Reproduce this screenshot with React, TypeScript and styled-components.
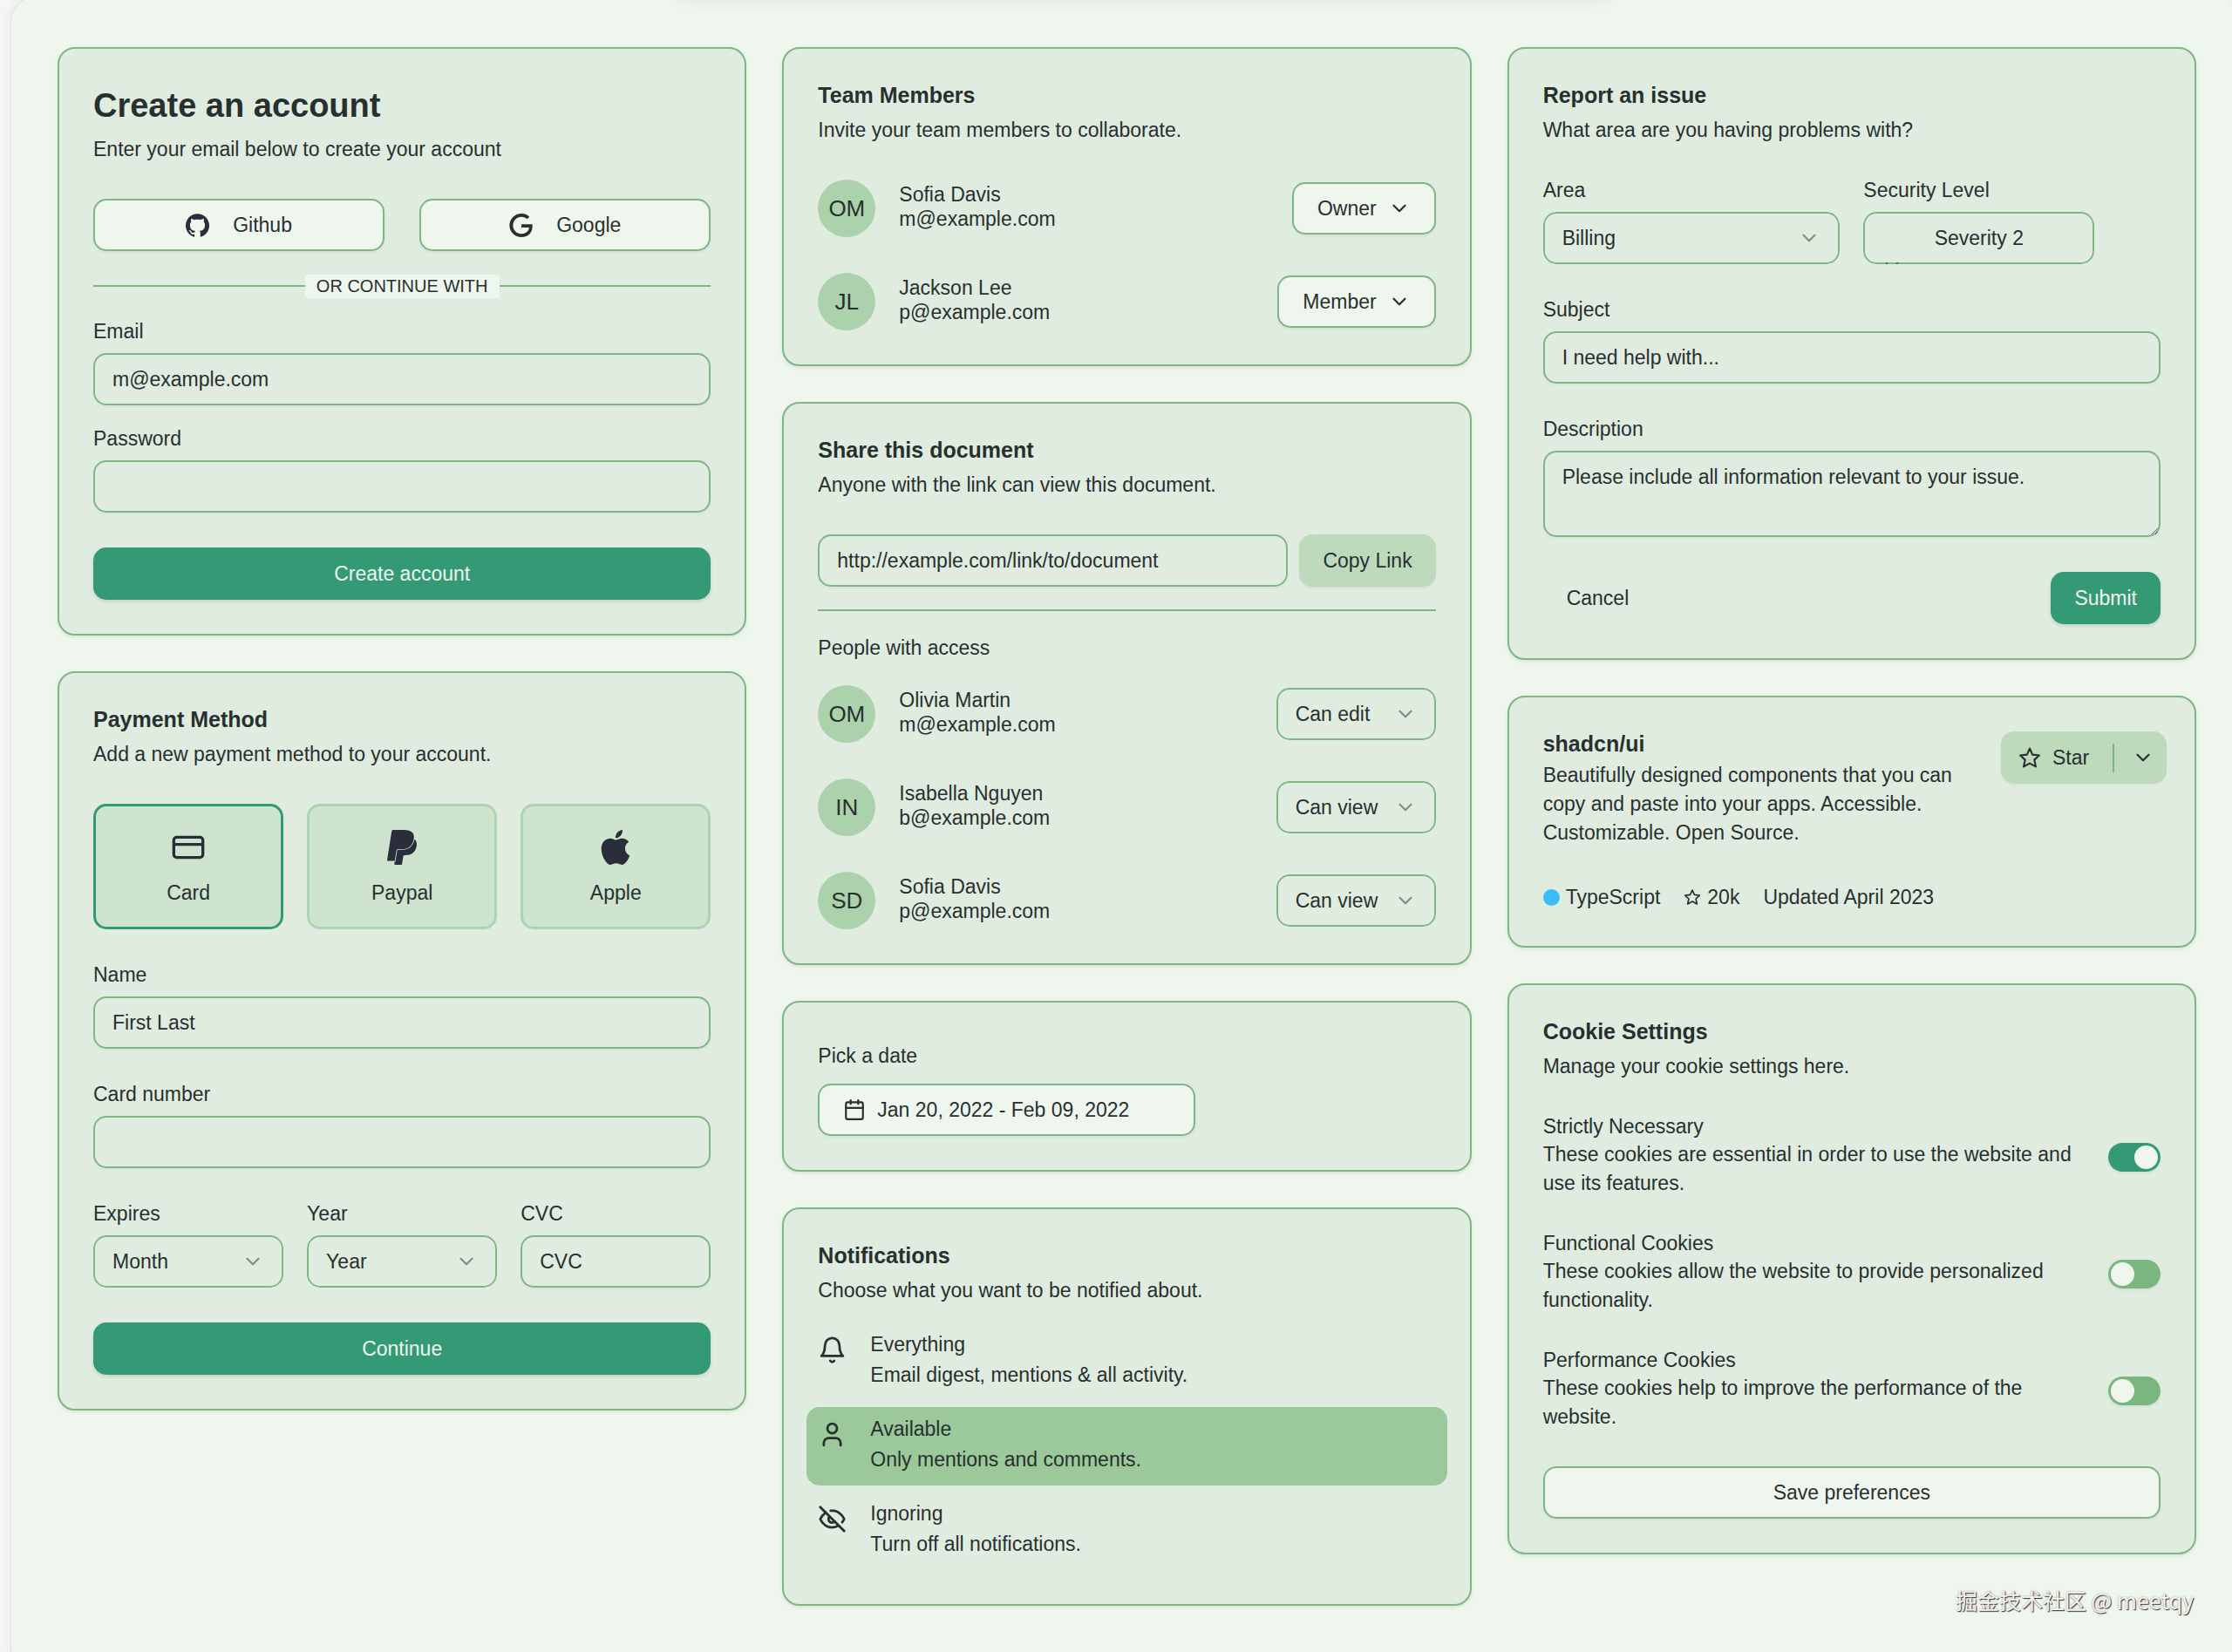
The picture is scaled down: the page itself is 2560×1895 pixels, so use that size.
import React, { useState } from "react";
import styled, { createGlobalStyle, css } from "styled-components";
import { Calendar, ChevronDown, CreditCard } from "lucide-react";
import { SiApple, SiGithub, SiGoogle } from "react-icons/si";

const c = {
  page: "#f5f6f5",
  panel: "#eff6ee",
  card: "#e0ece0",
  line: "#7eb684",
  text: "#28302f",
  brand: "#2a2d3a",
  primary: "#349a76",
  secondary: "#bddabd",
  tile: "#cee4cf",
  tileLine: "#aed3b0",
  avatar: "#abd2ab",
  accent: "#9bc99b",
  off: "#7ab77e",
};

const GlobalStyle = createGlobalStyle`
  *, *::before, *::after { box-sizing: border-box; }
  body {
    margin: 0;
    background: ${c.page};
    color: ${c.text};
    font-family: "Liberation Sans", Arial, sans-serif;
    font-size: 23px;
    line-height: 33px;
  }
  h2, h3, h4, p { margin: 0; padding: 0; }
  button, input, select, textarea { font: inherit; color: inherit; margin: 0; }
`;

const Panel = styled.main`
  position: relative;
  overflow: hidden;
  min-height: calc(100vh + 4px);
  margin: -4px 0 0 12px;
  padding: 57px 41px 53px 53px;
  border: 1px solid #dfe3df;
  border-right: 0;
  border-radius: 28px 12px 0 0;
  background: ${c.panel};
  box-shadow: 0 0 16px rgba(0, 0, 0, 0.06);
`;

const TopShade = styled.div`
  position: absolute;
  top: -30px;
  left: 30%;
  right: 28%;
  height: 28px;
  border-radius: 12px;
  box-shadow: 0 6px 16px rgba(0, 0, 0, 0.07);
`;

const Columns = styled.div`
  display: grid;
  grid-template-columns: repeat(3, minmax(0, 1fr));
  gap: 41px;
  align-items: start;
`;

const Column = styled.div`
  display: grid;
  gap: 41px;
`;

const Card = styled.section`
  display: flex;
  flex-direction: column;
  gap: 40px;
  padding: 39px;
  border: 2px solid ${c.line};
  border-radius: 20px;
  background: ${c.card};
  box-shadow: 0 2px 4px rgba(0, 0, 0, 0.08);
`;

const Title = styled.h3`
  font-size: 25px;
  line-height: 29px;
  font-weight: 700;
`;

const BigTitle = styled.h2`
  font-size: 38px;
  line-height: 53px;
  font-weight: 700;
`;

const Header = styled.header<{ $gap?: number }>`
  display: grid;
  gap: ${(p) => p.$gap ?? 8}px;
`;

const Lead = styled.p`
  line-height: 34px;
`;

const Body = styled.p`
  line-height: 33px;
`;

const ListTitle = styled.h4`
  font-size: 23px;
  font-weight: 400;
`;

const Stack = styled.div<{ $gap: number }>`
  display: grid;
  gap: ${(p) => p.$gap}px;
`;

const Split = styled.div<{ $cols: number; $gap: number }>`
  display: grid;
  grid-template-columns: repeat(${(p) => p.$cols}, minmax(0, 1fr));
  gap: ${(p) => p.$gap}px;
`;

const Between = styled.div`
  display: flex;
  align-items: center;
  justify-content: space-between;
`;

const buttonKinds = {
  primary: css`
    background: ${c.primary};
    color: #eff6ee;
    box-shadow: 0 2px 4px rgba(0, 0, 0, 0.12);
  `,
  outline: css`
    background: ${c.panel};
    border: 2px solid ${c.line};
    padding: 0 27px;
    box-shadow: 0 2px 3px rgba(0, 0, 0, 0.05);
  `,
  secondary: css`
    background: ${c.secondary};
    box-shadow: 0 2px 3px rgba(0, 0, 0, 0.05);
  `,
  ghost: css`
    background: transparent;
  `,
};

const Button = styled.button<{ $kind: keyof typeof buttonKinds; $gap?: number }>`
  display: inline-flex;
  align-items: center;
  justify-content: center;
  flex: none;
  gap: ${(p) => p.$gap ?? 13}px;
  height: 60px;
  padding: 0 27px;
  border: 0;
  border-radius: 15px;
  white-space: nowrap;
  cursor: pointer;
  ${(p) => buttonKinds[p.$kind]}
`;

const OrDivider = styled.div`
  display: flex;
  align-items: center;
  height: 28px;
  font-size: 20px;
  line-height: 27px;
  &::before, &::after {
    content: "";
    flex: 1;
    height: 2px;
    background: ${c.line};
  }
`;

const OrText = styled.span`
  padding: 0 13px;
  border-radius: 3px;
  background: ${c.panel};
`;

const FieldBox = styled.div`
  display: grid;
  gap: 13px;
  align-content: start;
`;

const Label = styled.label`
  line-height: 24px;
`;

const control = css`
  width: 100%;
  height: 60px;
  padding: 0 20px;
  border: 2px solid ${c.line};
  border-radius: 15px;
  background: transparent;
  box-shadow: 0 2px 3px rgba(0, 0, 0, 0.04);
  outline: none;
  &::placeholder { color: ${c.text}; opacity: 1; }
`;

const Input = styled.input`
  ${control}
`;

const TextArea = styled.textarea`
  ${control}
  display: block;
  height: 99px;
  padding: 12px 20px;
  line-height: 33px;
  resize: vertical;
`;

const SelectWrap = styled.span<{ $short?: boolean }>`
  position: relative;
  display: block;
  overflow: hidden;
  border-radius: 15px;
  width: ${(p) => (p.$short ? "265px" : "auto")};
`;

const SelectEl = styled.select<{ $centered?: boolean }>`
  ${control}
  display: block;
  appearance: none;
  padding-right: ${(p) => (p.$centered ? 20 : 64)}px;
  text-align-last: ${(p) => (p.$centered ? "center" : "left")};
`;

/* The narrow severity picker wraps its arrow below the text, where it is nearly all cut off. */
const Arrow = styled(ChevronDown)<{ $wrapped?: boolean }>`
  position: absolute;
  top: ${(p) => (p.$wrapped ? 49 : 17)}px;
  ${(p) => (p.$wrapped ? "left: 20px;" : "right: 22px;")}
  opacity: 0.5;
  pointer-events: none;
`;

const Tile = styled.label<{ $on: boolean }>`
  position: relative;
  display: flex;
  flex-direction: column;
  align-items: center;
  gap: 20px;
  padding: 27px;
  line-height: 24px;
  border: 3px solid ${(p) => (p.$on ? c.primary : c.tileLine)};
  border-radius: 15px;
  background: ${c.tile};
  cursor: pointer;
  svg { color: ${c.brand}; }
`;

const TileRadio = styled.input`
  position: absolute;
  inset: 0;
  margin: 0;
  opacity: 0;
`;

const Avatar = styled.span`
  display: flex;
  align-items: center;
  justify-content: center;
  flex: none;
  width: 66px;
  height: 66px;
  border-radius: 50%;
  background: ${c.avatar};
  font-size: 26px;
`;

const Who = styled.div`
  display: flex;
  align-items: center;
  gap: 27px;
`;

const Name = styled.p`
  line-height: 24px;
`;

const Rule = styled.hr`
  width: 100%;
  height: 2px;
  margin: 0;
  border: 0;
  background: ${c.line};
`;

const LinkRow = styled.div`
  display: flex;
  gap: 13px;
`;

const DateField = styled.div`
  display: grid;
  gap: 20px;
  padding-top: 10px;
  justify-items: start;
`;

const DateButton = styled(Button)`
  width: 433px;
  justify-content: flex-start;
`;

const NoticeList = styled.div`
  display: grid;
  gap: 7px;
  margin: -20px -13px 0;
`;

const Notice = styled.button<{ $on: boolean }>`
  display: flex;
  align-items: flex-start;
  gap: 27px;
  padding: 13px;
  border: 0;
  border-radius: 15px;
  background: ${(p) => (p.$on ? c.accent : "transparent")};
  text-align: left;
  cursor: pointer;
  svg { flex: none; margin-top: 2px; }
`;

const NoticeText = styled.span`
  display: grid;
  gap: 7px;
`;

const NoticeTitle = styled.span`
  line-height: 24px;
`;

const RepoHeader = styled.header`
  display: grid;
  grid-template-columns: minmax(0, 1fr) 183px;
  gap: 27px;
  align-items: start;
`;

const StarGroup = styled.div`
  display: flex;
  align-items: center;
  width: max-content;
  border-radius: 15px;
  background: ${c.secondary};
  box-shadow: 0 2px 3px rgba(0, 0, 0, 0.03);
`;

const StarButton = styled(Button)`
  padding: 0 27px 0 20px;
  box-shadow: none;
`;

const MoreButton = styled(Button)`
  padding: 0 14px 0 20px;
  box-shadow: none;
`;

const VRule = styled.span`
  width: 2px;
  height: 33px;
  background: ${c.line};
`;

const Meta = styled.div`
  display: flex;
  gap: 27px;
  line-height: 34px;
`;

const MetaItem = styled.span`
  display: inline-flex;
  align-items: center;
  gap: 7px;
`;

const Dot = styled.span`
  width: 19px;
  height: 19px;
  border-radius: 50%;
  background: #38bdf8;
`;

const CookieRow = styled.div`
  display: grid;
  grid-template-columns: minmax(0, 1fr) 60px;
  gap: 27px;
  align-items: center;
`;

const CookieLabel = styled.label`
  display: grid;
  gap: 4px;
`;

const Switch = styled.input`
  appearance: none;
  display: flex;
  align-items: center;
  width: 60px;
  height: 33px;
  padding: 0 3px;
  border-radius: 17px;
  background: ${c.off};
  box-shadow: 0 2px 3px rgba(0, 0, 0, 0.06);
  cursor: pointer;
  &::before {
    content: "";
    width: 27px;
    height: 27px;
    border-radius: 50%;
    background: ${c.panel};
  }
  &:checked {
    background: ${c.primary};
    justify-content: flex-end;
  }
`;

const Watermark = styled.div`
  position: absolute;
  right: 44px;
  bottom: 40px;
  color: #f4f6f4;
  font-family: "Noto Sans CJK SC", sans-serif;
  font-size: 25px;
  line-height: 40px;
  text-shadow: 1px 1px 1px #333, 0 0 2px #999;
`;

const stroke = {
  fill: "none",
  stroke: "currentColor",
  strokeWidth: 2,
  strokeLinecap: "round" as const,
  strokeLinejoin: "round" as const,
};

const StarIcon = ({ size }: { size: number }) => (
  <svg width={size} height={size} viewBox="0 0 24 24" aria-hidden="true" {...stroke}>
    <polygon points="12 2.4 14.9 8.9 22 9.7 16.9 14.4 18.4 21.6 12 18.1 5.6 21.6 7.1 14.4 2 9.7 9.1 8.9" />
  </svg>
);

const BellIcon = () => (
  <svg width="33" height="33" viewBox="0 0 24 24" aria-hidden="true" {...stroke}>
    <path d="M6 8a6 6 0 0 1 12 0c0 7 3 9 3 9H3s3-2 3-9" />
    <path d="M10.3 21a1.94 1.94 0 0 0 3.4 0" />
  </svg>
);

const PersonIcon = () => (
  <svg width="33" height="33" viewBox="0 0 24 24" aria-hidden="true" {...stroke}>
    <circle cx="12" cy="7" r="4" />
    <path d="M19 21v-2a4 4 0 0 0-4-4H9a4 4 0 0 0-4 4v2" />
  </svg>
);

const HiddenIcon = () => (
  <svg width="33" height="33" viewBox="0 0 24 24" aria-hidden="true" {...stroke}>
    <path d="M9.88 9.88a3 3 0 1 0 4.24 4.24" />
    <path d="M10.73 5.08A10.43 10.43 0 0 1 12 5c7 0 10 7 10 7a13.16 13.16 0 0 1-1.67 2.68" />
    <path d="M6.61 6.61A13.526 13.526 0 0 0 2 12s3 7 10 7a9.74 9.74 0 0 0 5.39-1.61" />
    <path d="M2 2l20 20" />
  </svg>
);

const PaypalIcon = () => (
  <svg width="40" height="40" viewBox="0 0 24 24" fill="currentColor" aria-hidden="true">
    <path d="M7.076 21.337H2.47a.641.641 0 0 1-.633-.74L4.944.901C5.026.382 5.474 0 5.998 0h7.46c2.57 0 4.578.543 5.69 1.81 1.01 1.15 1.304 2.42 1.012 4.287-.023.143-.047.288-.077.437-.983 5.05-4.349 6.797-8.647 6.797h-2.19c-.524 0-.968.382-1.05.9l-1.12 7.106zm14.146-14.42a3.35 3.35 0 0 0-.607-.541c-.013.076-.026.175-.041.254-.93 4.778-4.005 7.201-9.138 7.201h-2.19a.563.563 0 0 0-.556.479l-1.187 7.527h-.506l-.24 1.516a.56.56 0 0 0 .554.647h3.882c.46 0 .85-.334.922-.788.06-.26.76-4.852.816-5.09a.932.932 0 0 1 .923-.788h.58c3.76 0 6.705-1.528 7.565-5.946.36-1.847.174-3.388-.777-4.471z" />
  </svg>
);

function Field({ id, label, ...rest }: { id: string; label: string } & React.InputHTMLAttributes<HTMLInputElement>) {
  return (
    <FieldBox>
      <Label htmlFor={id}>{label}</Label>
      <Input id={id} {...rest} />
    </FieldBox>
  );
}

function SelectBox({ id, name, options, value, centered }: {
  id: string;
  name?: string;
  options: string[];
  value?: string;
  centered?: boolean;
}) {
  return (
    <SelectWrap $short={centered}>
      <SelectEl id={id} aria-label={name} defaultValue={value ?? options[0]} $centered={centered}>
        {options.map((o) => (
          <option key={o}>{o}</option>
        ))}
      </SelectEl>
      <Arrow size={26} $wrapped={centered} aria-hidden="true" />
    </SelectWrap>
  );
}

function SelectField({ label, ...rest }: { label: string; id: string; options: string[]; centered?: boolean }) {
  return (
    <FieldBox>
      <Label htmlFor={rest.id}>{label}</Label>
      <SelectBox {...rest} />
    </FieldBox>
  );
}

function Person({ initials, name, email, children }: {
  initials: string;
  name: string;
  email: string;
  children: React.ReactNode;
}) {
  return (
    <Between>
      <Who>
        <Avatar>{initials}</Avatar>
        <div>
          <Name>{name}</Name>
          <Body>{email}</Body>
        </div>
      </Who>
      {children}
    </Between>
  );
}

function CreateAccount() {
  return (
    <Card>
      <Header $gap={7}>
        <BigTitle>Create an account</BigTitle>
        <Body>Enter your email below to create your account</Body>
      </Header>
      <Stack $gap={26}>
        <Split $cols={2} $gap={40}>
          <Button type="button" $kind="outline" $gap={27}>
            <SiGithub size={27} color={c.brand} aria-hidden="true" />
            Github
          </Button>
          <Button type="button" $kind="outline" $gap={27}>
            <SiGoogle size={27} aria-hidden="true" />
            Google
          </Button>
        </Split>
        <OrDivider>
          <OrText>OR CONTINUE WITH</OrText>
        </OrDivider>
        <Field id="email" label="Email" type="email" placeholder="m@example.com" />
        <Field id="password" label="Password" type="password" />
      </Stack>
      <Button type="button" $kind="primary">Create account</Button>
    </Card>
  );
}

function PaymentMethod() {
  const [method, setMethod] = useState("Card");
  const methods = [
    { name: "Card", icon: <CreditCard size={40} aria-hidden="true" /> },
    { name: "Paypal", icon: <PaypalIcon /> },
    { name: "Apple", icon: <SiApple size={40} aria-hidden="true" /> },
  ];
  return (
    <Card>
      <Header>
        <Title>Payment Method</Title>
        <Lead>Add a new payment method to your account.</Lead>
      </Header>
      <Split $cols={3} $gap={27}>
        {methods.map((m) => (
          <Tile key={m.name} $on={method === m.name}>
            <TileRadio type="radio" name="method" checked={method === m.name} onChange={() => setMethod(m.name)} />
            {m.icon}
            {m.name}
          </Tile>
        ))}
      </Split>
      <Field id="name" label="Name" placeholder="First Last" />
      <Field id="number" label="Card number" />
      <Split $cols={3} $gap={27}>
        <SelectField id="month" label="Expires" options={["Month", "January", "February"]} />
        <SelectField id="year" label="Year" options={["Year", "2023", "2024"]} />
        <Field id="cvc" label="CVC" placeholder="CVC" />
      </Split>
      <Button type="button" $kind="primary">Continue</Button>
    </Card>
  );
}

function TeamMembers() {
  const members = [
    { initials: "OM", name: "Sofia Davis", email: "m@example.com", role: "Owner" },
    { initials: "JL", name: "Jackson Lee", email: "p@example.com", role: "Member" },
  ];
  return (
    <Card>
      <Header>
        <Title>Team Members</Title>
        <Lead>Invite your team members to collaborate.</Lead>
      </Header>
      <Stack $gap={41}>
        {members.map(({ role, ...m }) => (
          <Person key={m.initials} {...m}>
            <Button type="button" $kind="outline" aria-haspopup="menu">
              {role}
              <ChevronDown size={26} aria-hidden="true" />
            </Button>
          </Person>
        ))}
      </Stack>
    </Card>
  );
}

function ShareDocument() {
  const people = [
    { initials: "OM", name: "Olivia Martin", email: "m@example.com", access: "Can edit" },
    { initials: "IN", name: "Isabella Nguyen", email: "b@example.com", access: "Can view" },
    { initials: "SD", name: "Sofia Davis", email: "p@example.com", access: "Can view" },
  ];
  return (
    <Card>
      <Header>
        <Title>Share this document</Title>
        <Lead>Anyone with the link can view this document.</Lead>
      </Header>
      <Stack $gap={26}>
        <LinkRow>
          <Input aria-label="Document link" defaultValue="http://example.com/link/to/document" readOnly />
          <Button type="button" $kind="secondary">Copy Link</Button>
        </LinkRow>
        <Rule />
        <ListTitle>People with access</ListTitle>
        <Stack $gap={41}>
          {people.map(({ access, ...p }) => (
            <Person key={p.initials} {...p}>
              <SelectBox
                id={`access-${p.initials}`}
                name={`Access for ${p.name}`}
                options={["Can edit", "Can view"]}
                value={access}
              />
            </Person>
          ))}
        </Stack>
      </Stack>
    </Card>
  );
}

function PickDate() {
  return (
    <Card>
      <DateField>
        <Label htmlFor="date">Pick a date</Label>
        <DateButton id="date" type="button" $kind="outline">
          <Calendar size={26} aria-hidden="true" />
          Jan 20, 2022 - Feb 09, 2022
        </DateButton>
      </DateField>
    </Card>
  );
}

function Notifications() {
  const [level, setLevel] = useState("Available");
  const levels = [
    { name: "Everything", text: "Email digest, mentions & all activity.", icon: <BellIcon /> },
    { name: "Available", text: "Only mentions and comments.", icon: <PersonIcon /> },
    { name: "Ignoring", text: "Turn off all notifications.", icon: <HiddenIcon /> },
  ];
  return (
    <Card>
      <Header>
        <Title>Notifications</Title>
        <Lead>Choose what you want to be notified about.</Lead>
      </Header>
      <NoticeList>
        {levels.map((l) => (
          <Notice key={l.name} type="button" $on={level === l.name} onClick={() => setLevel(l.name)}>
            {l.icon}
            <NoticeText>
              <NoticeTitle>{l.name}</NoticeTitle>
              <span>{l.text}</span>
            </NoticeText>
          </Notice>
        ))}
      </NoticeList>
    </Card>
  );
}

function ReportIssue() {
  return (
    <Card>
      <Header>
        <Title>Report an issue</Title>
        <Lead>What area are you having problems with?</Lead>
      </Header>
      <Split $cols={2} $gap={27}>
        <SelectField id="area" label="Area" options={["Billing", "Team", "Account"]} />
        <SelectField id="severity" label="Security Level" options={["Severity 2", "Severity 1"]} centered />
      </Split>
      <Field id="subject" label="Subject" placeholder="I need help with..." />
      <FieldBox>
        <Label htmlFor="description">Description</Label>
        <TextArea id="description" placeholder="Please include all information relevant to your issue." />
      </FieldBox>
      <Between>
        <Button type="button" $kind="ghost">Cancel</Button>
        <Button type="button" $kind="primary">Submit</Button>
      </Between>
    </Card>
  );
}

function Repository() {
  return (
    <Card>
      <RepoHeader>
        <Stack $gap={5}>
          <Title>shadcn/ui</Title>
          <Body>
            Beautifully designed components that you can copy and paste into your apps. Accessible. Customizable. Open
            Source.
          </Body>
        </Stack>
        <StarGroup>
          <StarButton type="button" $kind="ghost">
            <StarIcon size={26} />
            Star
          </StarButton>
          <VRule />
          <MoreButton type="button" $kind="ghost" aria-label="More lists">
            <ChevronDown size={26} aria-hidden="true" />
          </MoreButton>
        </StarGroup>
      </RepoHeader>
      <Meta>
        <MetaItem>
          <Dot />
          TypeScript
        </MetaItem>
        <MetaItem>
          <StarIcon size={20} />
          20k
        </MetaItem>
        <span>Updated April 2023</span>
      </Meta>
    </Card>
  );
}

function CookieSettings() {
  const cookies = [
    { id: "necessary", name: "Strictly Necessary", text: "These cookies are essential in order to use the website and use its features.", on: true },
    { id: "functional", name: "Functional Cookies", text: "These cookies allow the website to provide personalized functionality.", on: false },
    { id: "performance", name: "Performance Cookies", text: "These cookies help to improve the performance of the website.", on: false },
  ];
  return (
    <Card>
      <Header>
        <Title>Cookie Settings</Title>
        <Lead>Manage your cookie settings here.</Lead>
      </Header>
      {cookies.map((k) => (
        <CookieRow key={k.id}>
          <CookieLabel htmlFor={k.id}>
            <NoticeTitle>{k.name}</NoticeTitle>
            <span>{k.text}</span>
          </CookieLabel>
          <Switch id={k.id} type="checkbox" role="switch" defaultChecked={k.on} />
        </CookieRow>
      ))}
      <Button type="button" $kind="outline">Save preferences</Button>
    </Card>
  );
}

export default function App() {
  return (
    <>
      <GlobalStyle />
      <Panel>
        <TopShade />
        <Columns>
          <Column>
            <CreateAccount />
            <PaymentMethod />
          </Column>
          <Column>
            <TeamMembers />
            <ShareDocument />
            <PickDate />
            <Notifications />
          </Column>
          <Column>
            <ReportIssue />
            <Repository />
            <CookieSettings />
          </Column>
        </Columns>
        <Watermark>掘金技术社区 @ meetqy</Watermark>
      </Panel>
    </>
  );
}
